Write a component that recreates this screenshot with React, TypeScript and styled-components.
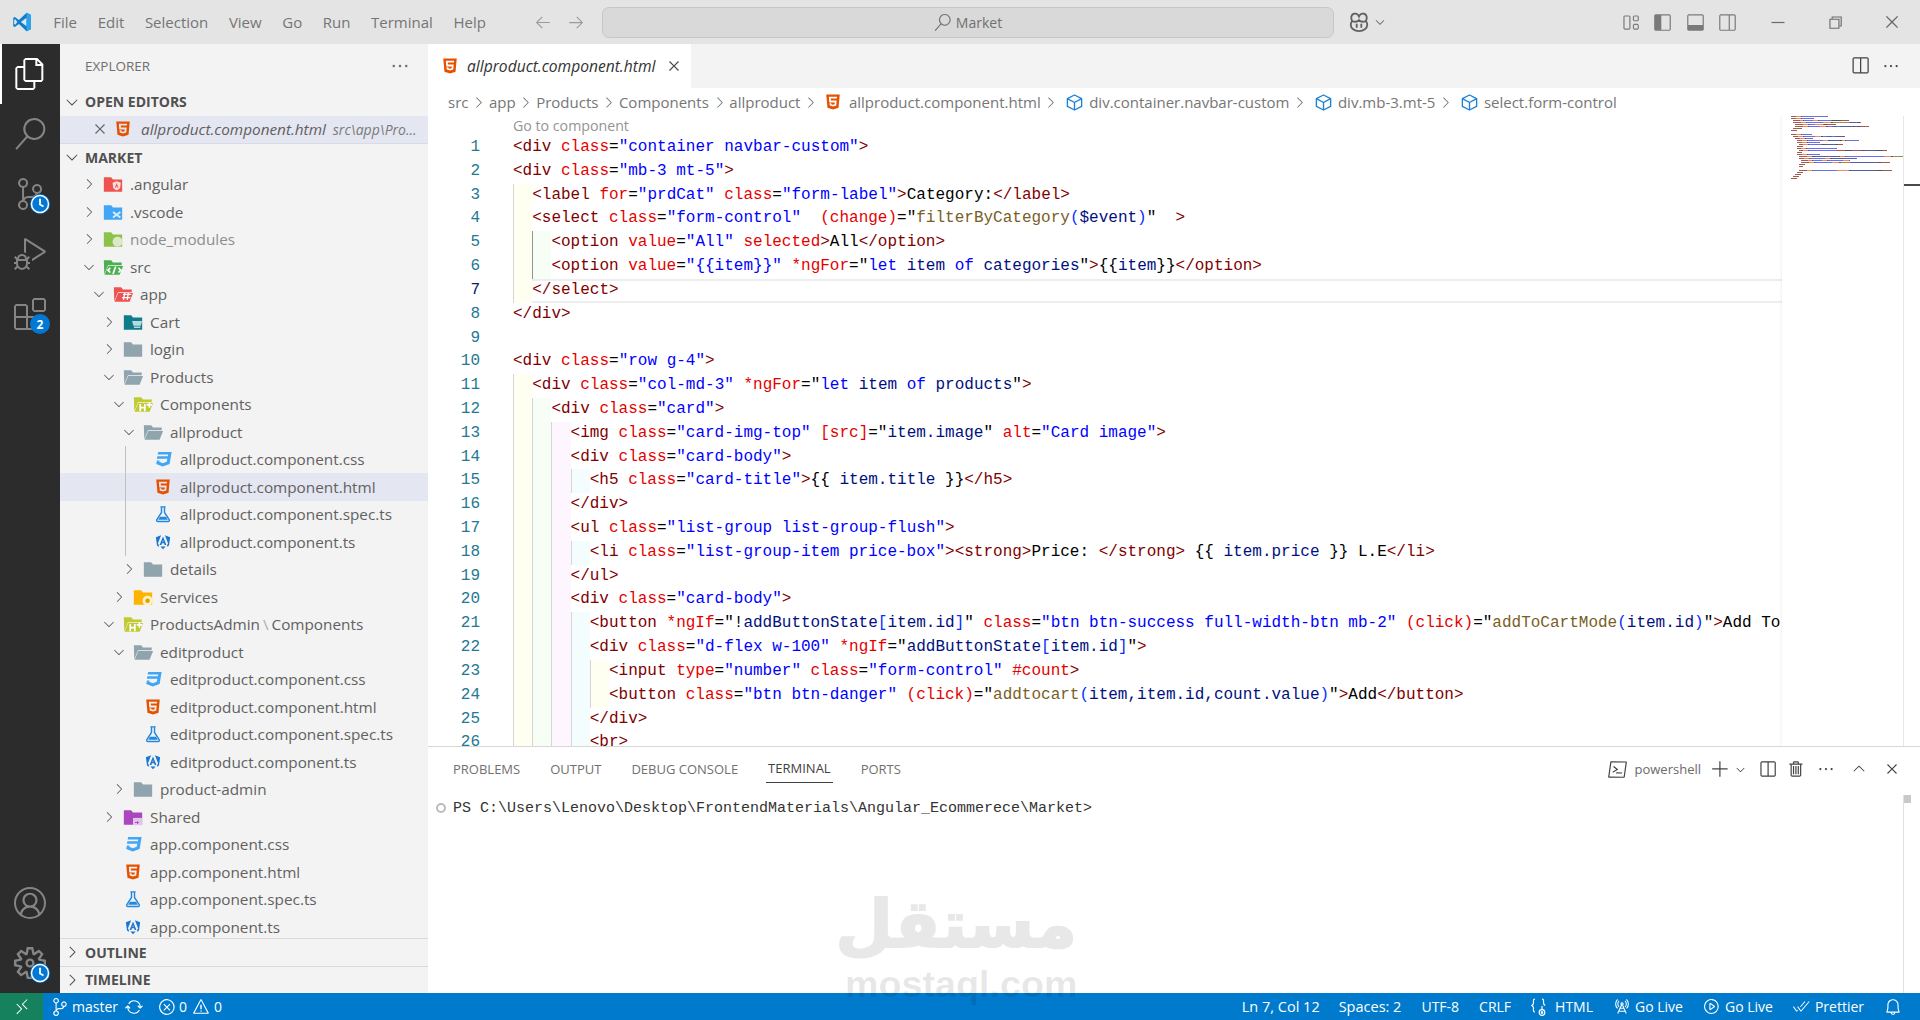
import React from "react";
import styled, { createGlobalStyle } from "styled-components";
import {
  VscFiles, VscSearch, VscSourceControl, VscDebugAlt, VscExtensions, VscAccount, VscSettingsGear,
  VscChevronRight, VscChevronDown, VscChevronUp, VscClose, VscEllipsis, VscSplitHorizontal, VscTrash, VscAdd,
  VscTerminalPowershell, VscRemote, VscSync, VscError, VscWarning, VscBell, VscRadioTower, VscPlayCircle,
  VscCheckAll, VscLayout, VscLayoutSidebarLeft, VscLayoutPanel, VscLayoutSidebarRightOff,
  VscChromeRestore, VscChromeClose, VscArrowLeft, VscArrowRight,
} from "react-icons/vsc";

const UI = `"Open Sans", "Noto Sans", sans-serif`;
const MONO = `"Liberation Mono", monospace`;

const Global = createGlobalStyle`
  html, body { margin: 0; padding: 0; background: #fff; }
  body { font-family: ${UI}; }
  * { box-sizing: border-box; }
`;

const Root = styled.div`
  position: relative; width: 1920px; height: 1020px; overflow: hidden;
  display: flex; flex-direction: column; background: #fff;
`;

/* ---------- title bar ---------- */
const TitleBar = styled.header`
  height: 44px; flex: none; display: flex; align-items: center; background: #e4e4e4; color: #6b6b6b;
`;
const LogoBox = styled.div`width: 43px; padding-left: 12px; display: flex;`;
const Menu = styled.nav`width: 491px; display: flex; font-size: 15px; color: #757575;`;
const MenuItem = styled.span`padding: 0 10.3px;`;
const NavArrows = styled.div`display: flex; gap: 15px; color: #9a9a9a; width: 68px;`;
const CommandCenter = styled.div`
  width: 732px; height: 31px; display: flex; align-items: center; justify-content: center; gap: 5px;
  background: #d9d9d9; border: 1px solid #c6c6c6; border-radius: 7px; font-size: 14px; color: #707070;
`;
const CopilotBox = styled.div`display: flex; align-items: center; gap: 3px; margin-left: 14px; color: #616161;`;
const TitleRight = styled.div`margin-left: auto; display: flex; align-items: center; color: #7a7a7a;`;
const LayoutBtn = styled.span`width: 32.5px; display: flex; justify-content: center;`;
const WinBtn = styled.span<{ $first?: boolean }>`
  width: 57px; display: flex; justify-content: center; margin-left: ${p => (p.$first ? "5px" : "0")}; color: #6a6a6a;
`;

/* ---------- body ---------- */
const Body = styled.div`flex: 1; min-height: 0; display: flex;`;
const ActivityBar = styled.aside`
  width: 60px; flex: none; background: #2c2c2c; display: flex; flex-direction: column; color: #858585;
`;
const ActivityItem = styled.div<{ $active?: boolean }>`
  position: relative; height: 60px; display: flex; align-items: center; justify-content: center;
  color: ${p => (p.$active ? "#fff" : "#858585")};
  border-left: ${p => (p.$active ? "2px solid #fff" : "0")};
  padding-right: ${p => (p.$active ? "2px" : "0")};
`;
const ActivitySpacer = styled.div`flex: 1;`;
const Badge = styled.span<{ $top: number }>`
  position: absolute; left: 30px; top: ${p => p.$top}px; width: 20px; height: 20px; border-radius: 50%;
  background: #0078d4; color: #fff; font-size: 12px; font-weight: 700; display: flex; align-items: center; justify-content: center;
`;

const Sidebar = styled.aside`
  width: 368px; flex: none; background: #f3f3f3; display: flex; flex-direction: column; color: #616161; overflow: hidden;
`;
const SideTitle = styled.div`
  height: 44px; flex: none; display: flex; align-items: center; justify-content: space-between;
  padding: 0 18px 0 25px; font-size: 13.5px; color: #6f6f6f;
`;
const Section = styled.div<{ $border?: boolean; $h?: number }>`
  height: ${p => p.$h ?? 27.5}px; flex: none; display: flex; align-items: center; font-size: 14px; font-weight: 700; color: #505050;
  padding-left: 3px; gap: 4px;
  border-top: ${p => (p.$border ? "1px solid #d9d9d9" : "0")};
`;
const OpenRow = styled.div`
  height: 28px; flex: none; display: flex; align-items: center; background: #e4e6f1; border-bottom: 1px solid #d8dae4;
  padding-left: 31px; font-style: italic; font-size: 15.3px; white-space: nowrap;
`;
const OpenIcon = styled.span`width: 24px; margin-left: 2px; flex: none; display: flex; justify-content: center;`;
const OpenName = styled.span`margin-left: 6px; color: #5f5f5f;`;
const OpenDesc = styled.span`margin-left: 7px; font-size: 14px; color: #7a7a7a;`;
const Tree = styled.div`flex: 1; min-height: 0; overflow: hidden;`;
const Row = styled.div<{ $level: number; $sel?: boolean; $guide?: boolean; $muted?: boolean }>`
  position: relative; height: 27.5px; display: flex; align-items: center; white-space: nowrap;
  padding-left: ${p => 21 + p.$level * 10}px; font-size: 15.3px;
  background: ${p => (p.$sel ? "#e4e6f1" : "transparent")};
  color: ${p => (p.$muted ? "#8e8e8e" : "#616161")};
  ${p => p.$guide ? `&::before { content: ""; position: absolute; left: 65px; top: 0; bottom: 0; width: 1px; background: #c0c0c0; }` : ""}
`;
const Chev = styled.span`width: 16px; flex: none; display: flex; justify-content: center; color: #616161;`;
const IconBox = styled.span`width: 22px; margin: 0 6px 0 5px; flex: none; display: flex; justify-content: center;`;
const Sep = styled.span`color: #aaa; margin: 0 3px;`;

/* ---------- main ---------- */
const Main = styled.main`flex: 1; min-width: 0; display: flex; flex-direction: column;`;
const TabBar = styled.div`height: 44px; flex: none; display: flex; background: #f3f3f3; align-items: stretch;`;
const Tab = styled.div`
  width: 263px; background: #fff; display: flex; align-items: center; padding-left: 13px; font-style: italic; font-size: 15.6px; color: #333;
`;
const TabName = styled.span`margin-left: 8px; flex: 1;`;
const TabClose = styled.span`display: flex; margin-right: 8px; color: #424242;`;
const TabActions = styled.div`margin-left: auto; display: flex; align-items: center; gap: 12px; padding-right: 20px; color: #424242;`;
const Crumbs = styled.div`
  height: 28px; flex: none; display: flex; align-items: center; padding-left: 20px; font-size: 15px; color: #767676; white-space: nowrap;
`;
const CrumbSep = styled.span`display: flex; margin: 0 1.75px; color: #777;`;
const CrumbIcon = styled.span`display: flex; margin: 0 7px 0 3px;`;
const CubeBox = styled.span`display: flex; margin: 0 5px 0 4px; color: #1b81d6;`;

const EditorArea = styled.div`flex: 1; min-height: 0; display: flex; overflow: hidden; position: relative;`;
const CodeCol = styled.div`width: 1354px; flex: none; overflow: hidden;`;
const Lens = styled.div`height: 20px; padding-left: 85px; font-size: 14.2px; line-height: 20px; color: #949494;`;
const Line = styled.div`
  height: 23.82px; display: flex; font-family: ${MONO}; font-size: 16px; line-height: 23.82px; white-space: pre;
`;
const LineNo = styled.span<{ $active?: boolean }>`
  width: 52px; margin-right: 33px; flex: none; text-align: right; color: ${p => (p.$active ? "#0b216f" : "#237893")};
`;
const LineBody = styled.div<{ $active?: boolean }>`
  flex: 1; display: flex; min-width: 0; box-shadow: ${p => (p.$active ? "inset 0 2px 0 #eee, inset 0 -2px 0 #eee" : "none")};
`;
const Indent = styled.span<{ $i: number; $hot?: boolean }>`
  width: 19.2px; flex: none;
  background: ${p => ["#fffff1", "#f6fef6", "#fef6fe", "#f3fdfd", "#fffff1"][p.$i]};
  border-left: 1px solid ${p => (p.$hot ? "#939393" : "#d6d6d6")};
`;
const COLORS: Record<string, string> = {
  t: "#800000", a: "#e50000", s: "#0000ff", x: "#000", f: "#795e26", v: "#001080", b: "#0431fa",
};
const MINI: Record<string, string> = {
  t: "#a05a50", a: "#f08a60", s: "#6a70e8", x: "#555", f: "#a08a50", v: "#5060a0", b: "#6a70e8",
};
const Tok = styled.span<{ $k: string }>`color: ${p => COLORS[p.$k]};`;
const Minimap = styled.div`
  position: relative; width: 121px; flex: none; background: #fff; box-shadow: -1px 0 2px rgba(0,0,0,.06); padding-left: 9px; overflow: hidden;
`;
const Overview = styled.div`position: relative; flex: 1; border-left: 1px solid #e6e6e6;`;
const CursorMark = styled.span`position: absolute; left: 0; right: 0; top: 68px; height: 2px; background: #4a4a4a;`;

const Panel = styled.section`height: 247px; flex: none; border-top: 1px solid #d8d8d8; display: flex; flex-direction: column;`;
const PanelHead = styled.div`height: 36px; flex: none; display: flex; align-items: stretch; padding-left: 23px; gap: 26px; font-size: 13px; color: #707070;`;
const PanelTab = styled.span<{ $active?: boolean }>`
  display: flex; align-items: center; height: 36px; padding: 7px 2px 0;
  color: ${p => (p.$active ? "#424242" : "#707070")};
  border-bottom: ${p => (p.$active ? "1px solid #424242" : "0")};
`;
const PanelActions = styled.div`margin-left: auto; display: flex; align-items: center; padding: 8px 14px 0 0; color: #424242; font-size: 13px;`;
const PanelBtn = styled.span<{ $w?: number }>`display: flex; justify-content: center; width: ${p => p.$w ?? 29}px;`;
const ShellName = styled.span`margin: 0 10px 0 8px; color: #6a6a6a;`;
const NewChev = styled.span`display: flex; margin: 0 6px 0 4px;`;
const TermBody = styled.div`flex: 1; display: flex;`;
const Term = styled.div`
  flex: 1; display: flex; align-items: flex-start; padding: 14px 0 0 8px; font-family: ${MONO}; font-size: 15px; line-height: 24px; color: #333; white-space: pre;
`;
const Dot = styled.span`width: 10px; height: 10px; margin: 6px 7px 0 0; border: 2px solid #bcbcbc; border-radius: 50%; flex: none;`;
const TermScroll = styled.div`width: 17px; flex: none; margin-top: 12px; border-left: 1px solid #e0e0e0;`;
const TermThumb = styled.div`width: 7px; height: 8px; background: #c8c8c8;`;

const StatusBar = styled.footer`
  height: 27px; flex: none; background: #007acc; color: #fff; display: flex; align-items: center; font-size: 14px; white-space: nowrap;
`;
const Remote = styled.div`width: 43px; align-self: stretch; background: #16825d; display: flex; align-items: center; justify-content: center;`;
const StatusLeft = styled.div`display: flex; align-items: center; padding-left: 8px;`;
const StatusRight = styled.div`margin-left: auto; display: flex; align-items: center; padding-right: 18px;`;
const StatusItem = styled.span<{ $ml?: number; $gap?: number; $fs?: number }>`
  display: flex; align-items: center; gap: ${p => p.$gap ?? 5}px; margin-left: ${p => p.$ml ?? 0}px; font-size: ${p => p.$fs ?? 14}px;
`;

const Watermark = styled.div`
  position: absolute; left: 845px; top: 883px; width: 232px; pointer-events: none; text-align: center; line-height: 1;
`;
const WmArabic = styled.div`
  font-family: "DejaVu Sans", sans-serif; font-weight: 700; font-size: 66px; height: 84px; line-height: 84px; white-space: nowrap;
  color: #e8e8e8; -webkit-text-stroke: 2px #e8e8e8;
`;
const WmLatin = styled.div`
  font-family: "Liberation Sans", sans-serif; font-weight: 700; font-size: 37.7px; line-height: 34px; white-space: nowrap; color: rgba(0,0,0,.1);
`;

/* ---------- drawn icons ---------- */
const VsLogo = () => (
  <svg width="20" height="20" viewBox="0 0 24 24">
    <path d="M17.5 1 8.3 9.7 3.4 6 1.5 7v10l1.9 1 4.9-3.7 9.2 8.7 5-2.3V3.3z" fill="#0a7fd0" />
    <path d="M17.5 7 10.6 12l6.9 5z" fill="#e4e4e4" />
    <path d="M17.5 1l5 2.3v17.4l-5 2.3z" fill="#2aa4ef" />
    <path d="M3.9 8.6 6.4 12l-2.5 3.2L2.6 14.5V9.4z" fill="#e4e4e4" />
  </svg>
);
const Copilot = () => (
  <svg width="22" height="22" viewBox="0 0 24 24" fill="none" stroke="currentColor" strokeWidth="2">
    <path d="M4.5 11c-1.5-3-1.5-7 2-8 2.5-.6 4.5.4 5.5 3 1-2.6 3-3.6 5.5-3 3.5 1 3.5 5 2 8 1 1 1.5 2.5 1.5 4 0 4-4 7-9 7s-9-3-9-7c0-1.5.5-3 1.5-4z" />
    <path d="M4.5 11c2.5 1 5.5 1 7.5-1 2 2 5 2 7.5 1" />
    <path d="M9.5 14.5v3M14.5 14.5v3" strokeLinecap="round" />
  </svg>
);
const MinimizeGlyph = () => (
  <svg width="18" height="18" viewBox="0 0 18 18"><path d="M2.5 9.5h13" stroke="currentColor" strokeWidth="1.2" /></svg>
);
const Clock = ({ size = 18 }: { size?: number }) => (
  <svg width={size} height={size} viewBox="0 0 20 20" fill="none">
    <circle cx="10" cy="10" r="8.5" fill="#0078d4" stroke="#fff" strokeWidth="1.5" />
    <path d="M10 4.8V10.5l3.5 2" stroke="#fff" strokeWidth="1.8" fill="none" />
  </svg>
);
const CubeGlyph = () => (
  <svg width="19" height="19" viewBox="0 0 24 24" fill="none" stroke="currentColor" strokeWidth="1.7" strokeLinejoin="round">
    <path d="M12 2.5 21 7v10l-9 4.5L3 17V7z" />
    <path d="M3 7l9 5 9-5M12 12v9.5" />
  </svg>
);
const BraceGlyph = () => (
  <svg width="16" height="20" viewBox="0 0 16 20" fill="none" stroke="#fff" strokeWidth="1.2">
    <path d="M4 2c-2 0-1.5 2-1.5 3.5S2 8 .8 8.5c1.2.5 1.7 1.5 1.7 3S2 15 4 15" />
    <path d="M11 2c2 0 1.500 2 1.500 3.500s.5 2.500 1.700 3" />
    <circle cx="11" cy="15.500" r="2.800" />
    <path d="M10 14.500l2 2M12 14.500l-2 2M11 12.700V9" />
  </svg>
);
const Html = ({ s = 18 }: { s?: number }) => (
  <svg width={s} height={s} viewBox="0 0 24 24">
    <path fillRule="evenodd" fill="#e65100" d="M3 2l1.6 17.5L12 22l7.4-2.5L21 2H3zm14.2 5.2H9l.2 2.7h7.700l-.6 6.700-4.300 1.300-4.300-1.300-.3-3h2.300l.1 1.400 2.200.6 2.200-.6.2-2.500H7L6.500 5h10.900z" />
  </svg>
);
const Css = ({ s = 18 }: { s?: number }) => (
  <svg width={s} height={s} viewBox="0 0 24 24">
    <path fill="#42a5f5" d="M5.500 2.500 4.900 6h14l-.5 2.300H4.500L3.800 11.700h14l-.8 4-5.300 1.800-4.700-1.800.3-1.700H3.900L3 18.500 11.600 22l9.200-3.200L23.500 2.500z" />
  </svg>
);
const Flask = ({ s = 18 }: { s?: number }) => (
  <svg width={s} height={s} viewBox="0 0 24 24" fill="none" stroke="#2088de" strokeWidth="1.9">
    <path d="M8.500 2.500h7M10 3v7L3.800 19.500c-.7 1.200 0 2.500 1.400 2.500h13.600c1.400 0 2.100-1.300 1.400-2.500L14 10V3" />
    <path d="M8 15.500h8l2.500 4h-13z" fill="#2088de" stroke="none" />
  </svg>
);
const Angular = ({ s = 18 }: { s?: number }) => (
  <svg width={s} height={s} viewBox="0 0 24 24" fill="#1976d2">
    <path d="M2.500 5.500 9.500 3 5.300 13.500 7 17.500 5.800 18 4 16.500z" />
    <path d="M21.500 5.500 14.500 3l4.200 10.500L17 17.500l1.200.5 1.800-1.500z" />
    <path fillRule="evenodd" d="M12 4.500l4.600 11.500h-2.400l-.8-2.200h-2.800l-.8 2.200H7.400zM11.200 11.800h1.600L12 9.500z" />
    <path d="M8.500 18h7L12 21.800z" />
  </svg>
);
type FolderProps = { c: string; open?: boolean; mark?: "ng" | "vs" | "dot" | "code" | "hash" | "cart" | "plus" | "gear" | "share" };
const Folder = ({ c, open, mark }: FolderProps) => (
  <svg width="22" height="22" viewBox="0 0 24 24">
    {open ? (
      <>
        <path fill={c} d="M2 4.500h8l2 2.500h9.500v3H6.500L2.500 20z" />
        <path fill={c} d="M6.800 11H23l-3.800 9.500H2.800z" />
      </>
    ) : (
      <path fill={c} d="M2 4.500h8l2 2.500h10v13.500H2z" />
    )}
    {mark === "ng" && <path fill="#fff" opacity=".8" d="M16 9l4.500 1.500-.8 6L16 19l-3.700-2.500-.8-6zM16 11l-2 5h1l.5-1.200h1L17 16h1z" fillRule="evenodd" />}
    {mark === "vs" && <path stroke="#fff" opacity=".8" strokeWidth="2" fill="none" d="M12 12l8 6M12 18l8-6" />}
    {mark === "dot" && <circle cx="17" cy="15" r="5.5" fill="#dce8c8" />}
    {mark === "code" && <path stroke="#fff" strokeWidth="1.8" fill="none" d="M9 13l-2.500 2.500L9 18M18 13l2.500 2.500L18 18M15 11.500l-3 8" />}
    {mark === "hash" && <path stroke="#fff" strokeWidth="1.4" fill="none" d="M12 12.500h9M11 16h9M14 10.500l-1.500 8M18 10.500l-1.500 8" />}
    {mark === "cart" && <path fill="#b6dbe0" d="M11 11h11l-1.500 5H12.500zM13 17h7v1.500h-7z" />}
    {mark === "plus" && <path stroke="#fff" strokeWidth="1.8" fill="none" d="M9 12v8M14 12v8M8 16h7M19 10v6M16 13h6" />}
    {mark === "gear" && <><circle cx="17" cy="16" r="5.5" fill="#fff3c4" /><circle cx="17" cy="16" r="2.5" fill="#e0a000" /></>}
    {mark === "share" && <><rect x="12" y="13" width="10" height="8" fill="#e3c4ea" /><path d="M14 18h4l-1.500-1.500M18 18l-1.500 1.500" stroke="#ab47bc" fill="none" /></>}
  </svg>
);

/* ---------- data ---------- */
type Node = { n: React.ReactNode; l: number; open?: boolean; dir?: boolean; icon: React.ReactNode; sel?: boolean; guide?: boolean; muted?: boolean };
const gray = "#90a4ae";
const files = (base: string, l: number, guide?: boolean, sel?: boolean): Node[] => [
  { n: `${base}.css`, l, icon: <Css />, guide },
  { n: `${base}.html`, l, icon: <Html />, guide, sel },
  { n: `${base}.spec.ts`, l, icon: <Flask />, guide },
  { n: `${base}.ts`, l, icon: <Angular />, guide },
];
const TREE: Node[] = [
  { n: ".angular", l: 0, dir: true, icon: <Folder c="#ef5350" mark="ng" /> },
  { n: ".vscode", l: 0, dir: true, icon: <Folder c="#42a5f5" mark="vs" /> },
  { n: "node_modules", l: 0, dir: true, muted: true, icon: <Folder c="#8bc34a" mark="dot" /> },
  { n: "src", l: 0, dir: true, open: true, icon: <Folder c="#4caf50" open mark="code" /> },
  { n: "app", l: 1, dir: true, open: true, icon: <Folder c="#ef5350" open mark="hash" /> },
  { n: "Cart", l: 2, dir: true, icon: <Folder c="#0f7c8a" mark="cart" /> },
  { n: "login", l: 2, dir: true, icon: <Folder c={gray} /> },
  { n: "Products", l: 2, dir: true, open: true, icon: <Folder c={gray} open /> },
  { n: "Components", l: 3, dir: true, open: true, icon: <Folder c="#c0ca33" open mark="plus" /> },
  { n: "allproduct", l: 4, dir: true, open: true, icon: <Folder c={gray} open /> },
  ...files("allproduct.component", 5, true, true),
  { n: "details", l: 4, dir: true, icon: <Folder c={gray} /> },
  { n: "Services", l: 3, dir: true, icon: <Folder c="#ffb300" mark="gear" /> },
  { n: <>ProductsAdmin<Sep>\</Sep>Components</>, l: 2, dir: true, open: true, icon: <Folder c="#c0ca33" open mark="plus" /> },
  { n: "editproduct", l: 3, dir: true, open: true, icon: <Folder c={gray} open /> },
  ...files("editproduct.component", 4),
  { n: "product-admin", l: 3, dir: true, icon: <Folder c={gray} /> },
  { n: "Shared", l: 2, dir: true, icon: <Folder c="#ab47bc" mark="share" /> },
  ...files("app.component", 2),
];

const tag = (s: string) => `t:<${s}>`;
const CODE: [number, string][] = [
  [0, 't:<div |a:class|x:=|s:"container navbar-custom"|t:>'],
  [0, 't:<div |a:class|x:=|s:"mb-3 mt-5"|t:>'],
  [1, 't:<label |a:for|x:=|s:"prdCat" |a:class|x:=|s:"form-label"|t:>|x:Category:|t:</label>'],
  [1, 't:<select |a:class|x:=|s:"form-control"  |a:(change)|x:="|f:filterByCategory|b:(|v:$event|b:)|x:"  |t:>'],
  [2, 't:<option |a:value|x:=|s:"All" |a:selected|t:>|x:All|t:</option>'],
  [2, 't:<option |a:value|x:=|s:"{{item}}" |a:*ngFor|x:="|s:let |v:item |s:of |v:categories|x:"|t:>|x:{{|v:item|x:}}|t:</option>'],
  [1, tag("/select")],
  [0, tag("/div")],
  [0, ""],
  [0, 't:<div |a:class|x:=|s:"row g-4"|t:>'],
  [1, 't:<div |a:class|x:=|s:"col-md-3" |a:*ngFor|x:="|s:let |v:item |s:of |v:products|x:"|t:>'],
  [2, 't:<div |a:class|x:=|s:"card"|t:>'],
  [3, 't:<img |a:class|x:=|s:"card-img-top" |a:[src]|x:="|v:item.image|x:" |a:alt|x:=|s:"Card image"|t:>'],
  [3, 't:<div |a:class|x:=|s:"card-body"|t:>'],
  [4, 't:<h5 |a:class|x:=|s:"card-title"|t:>|x:{{ |v:item.title |x:}}|t:</h5>'],
  [3, tag("/div")],
  [3, 't:<ul |a:class|x:=|s:"list-group list-group-flush"|t:>'],
  [4, 't:<li |a:class|x:=|s:"list-group-item price-box"|t:><strong>|x:Price: |t:</strong>|x: {{ |v:item.price |x:}} L.E|t:</li>'],
  [3, tag("/ul")],
  [3, 't:<div |a:class|x:=|s:"card-body"|t:>'],
  [4, 't:<button |a:*ngIf|x:="!|v:addButtonState|b:[|v:item.id|b:]|x:" |a:class|x:=|s:"btn btn-success full-width-btn mb-2" |a:(click)|x:="|f:addToCartMode|b:(|v:item.id|b:)|x:"|t:>|x:Add To Cart|t:</button>'],
  [4, 't:<div |a:class|x:=|s:"d-flex w-100" |a:*ngIf|x:="|v:addButtonState|b:[|v:item.id|b:]|x:"|t:>'],
  [5, 't:<input |a:type|x:=|s:"number" |a:class|x:=|s:"form-control" |a:#count|t:>'],
  [5, 't:<button |a:class|x:=|s:"btn btn-danger" |a:(click)|x:="|f:addtocart|b:(|v:item,item.id,count.value|b:)|x:"|t:>|x:Add|t:</button>'],
  [4, tag("/div")],
  [4, tag("br")],
];
const MINI_EXTRA: [number, string][] = [
  [4, ""],
  [4, 't:<button |a:class|x:=|s:"btn btn-primary w-100" |a:[routerLink]|x:="|v:item.id,details,product|x:"|t:>|x:Details|t:</button>'],
  [3, tag("/div")],
  [2, tag("/div")],
  [1, tag("/div")],
  [0, tag("/div")],
];
const parse = (s: string) => (s ? s.split("|").map(p => ({ k: p[0], v: p.slice(2) })) : []);

const MiniDrawing = () => {
  const rows = [...CODE, ...MINI_EXTRA];
  return (
    <svg width="112" height="70" viewBox="0 0 112 70" display="block">
      {rows.map(([ind, s], y) => {
        let x = ind * 2;
        return parse(s).map((t, i) => {
          const el = <rect key={`${y}-${i}`} x={x} y={y * 2} width={t.v.length} height={1} fill={MINI[t.k]} />;
          x += t.v.length;
          return el;
        });
      })}
    </svg>
  );
};

const MENU = ["File", "Edit", "Selection", "View", "Go", "Run", "Terminal", "Help"];
const Cube = () => <CubeBox><CubeGlyph /></CubeBox>;
const Gt = () => <CrumbSep><VscChevronRight size={17} /></CrumbSep>;

export default function App() {
  return (
    <Root>
      <Global />
      <TitleBar>
        <LogoBox><VsLogo /></LogoBox>
        <Menu>{MENU.map(m => <MenuItem key={m}>{m}</MenuItem>)}</Menu>
        <NavArrows><VscArrowLeft size={18} /><VscArrowRight size={18} /></NavArrows>
        <CommandCenter><VscSearch size={17} />Market</CommandCenter>
        <CopilotBox><Copilot /><VscChevronDown size={14} /></CopilotBox>
        <TitleRight>
          <LayoutBtn><VscLayout size={19} /></LayoutBtn>
          <LayoutBtn><VscLayoutSidebarLeft size={19} /></LayoutBtn>
          <LayoutBtn><VscLayoutPanel size={19} /></LayoutBtn>
          <LayoutBtn><VscLayoutSidebarRightOff size={19} /></LayoutBtn>
          <WinBtn $first><MinimizeGlyph /></WinBtn>
          <WinBtn><VscChromeRestore size={18} /></WinBtn>
          <WinBtn><VscChromeClose size={18} /></WinBtn>
        </TitleRight>
      </TitleBar>

      <Body>
        <ActivityBar>
          <ActivityItem $active><VscFiles size={32} /></ActivityItem>
          <ActivityItem><VscSearch size={32} /></ActivityItem>
          <ActivityItem><VscSourceControl size={32} /><Badge $top={30}><Clock size={20} /></Badge></ActivityItem>
          <ActivityItem><VscDebugAlt size={32} /></ActivityItem>
          <ActivityItem><VscExtensions size={32} /><Badge $top={30}>2</Badge></ActivityItem>
          <ActivitySpacer />
          <ActivityItem><VscAccount size={32} /></ActivityItem>
          <ActivityItem><VscSettingsGear size={32} /><Badge $top={30}><Clock size={20} /></Badge></ActivityItem>
        </ActivityBar>

        <Sidebar>
          <SideTitle>EXPLORER<VscEllipsis size={20} /></SideTitle>
          <Section><VscChevronDown size={18} />OPEN EDITORS</Section>
          <OpenRow>
            <VscClose size={18} />
            <OpenIcon><Html /></OpenIcon>
            <OpenName>allproduct.component.html</OpenName>
            <OpenDesc>src\app\Pro...</OpenDesc>
          </OpenRow>
          <Section $h={27}><VscChevronDown size={18} />MARKET</Section>
          <Tree>
            {TREE.map((r, i) => (
              <Row key={i} $level={r.l} $sel={r.sel} $guide={r.guide} $muted={r.muted}>
                <Chev>{r.dir ? (r.open ? <VscChevronDown size={18} /> : <VscChevronRight size={18} />) : null}</Chev>
                <IconBox>{r.icon}</IconBox>
                {r.n}
              </Row>
            ))}
          </Tree>
          <Section $border><VscChevronRight size={18} />OUTLINE</Section>
          <Section $border><VscChevronRight size={18} />TIMELINE</Section>
        </Sidebar>

        <Main>
          <TabBar>
            <Tab>
              <Html />
              <TabName>allproduct.component.html</TabName>
              <TabClose><VscClose size={18} /></TabClose>
            </Tab>
            <TabActions><VscSplitHorizontal size={20} /><VscEllipsis size={18} /></TabActions>
          </TabBar>
          <Crumbs>
            src<Gt />app<Gt />Products<Gt />Components<Gt />allproduct<Gt />
            <CrumbIcon><Html /></CrumbIcon>allproduct.component.html<Gt />
            <Cube />div.container.navbar-custom<Gt />
            <Cube />div.mb-3.mt-5<Gt />
            <Cube />select.form-control
          </Crumbs>
          <EditorArea>
            <CodeCol>
              <Lens>Go to component</Lens>
              {CODE.map(([ind, s], i) => (
                <Line key={i}>
                  <LineNo $active={i === 6}>{i + 1}</LineNo>
                  <LineBody $active={i === 6}>
                    {Array.from({ length: ind }).map((_, k) => (
                      <Indent key={k} $i={k} $hot={k === 1 && (i === 4 || i === 5)} />
                    ))}
                    {parse(s).map((t, k) => <Tok key={k} $k={t.k}>{t.v}</Tok>)}
                  </LineBody>
                </Line>
              ))}
            </CodeCol>
            <Minimap><MiniDrawing /></Minimap>
            <Overview><CursorMark /></Overview>
          </EditorArea>
          <Panel>
            <PanelHead>
              <PanelTab>PROBLEMS</PanelTab>
              <PanelTab>OUTPUT</PanelTab>
              <PanelTab>DEBUG CONSOLE</PanelTab>
              <PanelTab $active>TERMINAL</PanelTab>
              <PanelTab>PORTS</PanelTab>
              <PanelActions>
                <VscTerminalPowershell size={19} />
                <ShellName>powershell</ShellName>
                <VscAdd size={19} />
                <NewChev><VscChevronDown size={13} /></NewChev>
                <PanelBtn><VscSplitHorizontal size={19} /></PanelBtn>
                <PanelBtn><VscTrash size={19} /></PanelBtn>
                <PanelBtn><VscEllipsis size={18} /></PanelBtn>
                <PanelBtn $w={37}><VscChevronUp size={18} /></PanelBtn>
                <PanelBtn><VscClose size={18} /></PanelBtn>
              </PanelActions>
            </PanelHead>
            <TermBody>
              <Term><Dot />PS C:\Users\Lenovo\Desktop\FrontendMaterials\Angular_Ecommerece\Market&gt;</Term>
              <TermScroll><TermThumb /></TermScroll>
            </TermBody>
          </Panel>
        </Main>
      </Body>

      <StatusBar>
        <Remote><VscRemote size={18} /></Remote>
        <StatusLeft>
          <StatusItem $gap={3}><VscSourceControl size={18} />master</StatusItem>
          <StatusItem $ml={7}><VscSync size={18} /></StatusItem>
          <StatusItem $ml={15} $gap={3}><VscError size={18} />0</StatusItem>
          <StatusItem $ml={5} $gap={4}><VscWarning size={18} />0</StatusItem>
        </StatusLeft>
        <StatusRight>
          <StatusItem $fs={14.5}>Ln 7, Col 12</StatusItem>
          <StatusItem $ml={19} $fs={14.5}>Spaces: 2</StatusItem>
          <StatusItem $ml={20}>UTF-8</StatusItem>
          <StatusItem $ml={20}>CRLF</StatusItem>
          <StatusItem $ml={20} $gap={8}><BraceGlyph />HTML</StatusItem>
          <StatusItem $ml={20}><VscRadioTower size={17} />Go Live</StatusItem>
          <StatusItem $ml={20}><VscPlayCircle size={17} />Go Live</StatusItem>
          <StatusItem $ml={20}><VscCheckAll size={17} />Prettier</StatusItem>
          <StatusItem $ml={20}><VscBell size={18} /></StatusItem>
        </StatusRight>
      </StatusBar>

      <Watermark>
        <WmArabic dir="rtl">مستقل</WmArabic>
        <WmLatin>mostaql.com</WmLatin>
      </Watermark>
    </Root>
  );
}
